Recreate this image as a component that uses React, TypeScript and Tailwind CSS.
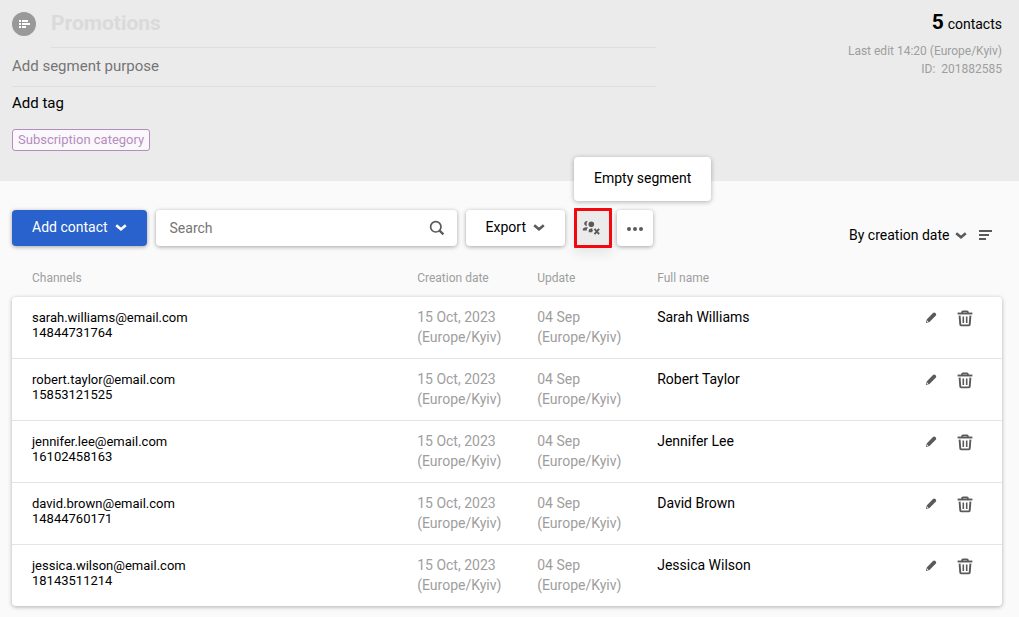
import React from "react";

type Contact = { email: string; phone: string; name: string };

const contacts: Contact[] = [
  { email: "sarah.williams@email.com", phone: "14844731764", name: "Sarah Williams" },
  { email: "robert.taylor@email.com", phone: "15853121525", name: "Robert Taylor" },
  { email: "jennifer.lee@email.com", phone: "16102458163", name: "Jennifer Lee" },
  { email: "david.brown@email.com", phone: "14844760171", name: "David Brown" },
  { email: "jessica.wilson@email.com", phone: "18143511214", name: "Jessica Wilson" },
];

const rowGrid =
  "grid grid-cols-[minmax(0,3fr)_120px_120px_minmax(0,2fr)_68px] px-5";
const raised = "rounded bg-white shadow-[0_1px_4px_rgba(0,0,0,0.35)]";

function Chevron({ className }: { className?: string }) {
  return (
    <svg className={className} width="12" height="8" viewBox="0 0 12 8" fill="none" stroke="currentColor" strokeWidth="2.6" aria-hidden="true">
      <path d="M1.2 2.200 6 6.200l4.800-4" />
    </svg>
  );
}

function SegmentIcon() {
  return (
    <svg width="24" height="24" viewBox="0 0 24 24" aria-hidden="true">
      <circle cx="12" cy="12" r="12" fill="#999" />
      <path fill="#fff" d="M7 8h2v2H7zM10 8h6v2h-6zM7 11h2v2H7zM10 11h8v2h-8zM7 14h2v2H7zM10 14h4v2h-4z" />
    </svg>
  );
}

function SearchIcon() {
  return (
    <svg width="16" height="16" viewBox="0 0 16 16" fill="none" stroke="#5a5a5a" aria-hidden="true">
      <circle cx="6.8" cy="6.8" r="5.200" strokeWidth="1.7" />
      <path d="m10.6 10.6 3.800 3.800" strokeWidth="2.2" />
    </svg>
  );
}

function EmptySegmentIcon() {
  return (
    <svg width="18" height="16" viewBox="0 0 18 16" fill="#5a5a5a" aria-hidden="true">
      <path d="M5.600 1.100C4 .7 2.200 1.900 2.200 3.600c0 1.500 1.200 2.500 2.800 2.500-.7-1.700-.5-3.600.6-5z" />
      <circle cx="9.300" cy="4.300" r="2.800" />
      <path d="M.8 10.500V9.300C.8 7.800 2.600 7.200 6 7.200c-.8.8-1.200 1.800-1.200 3.300z" />
      <path d="M6.700 12.200v-1.400c0-1.500 1.300-2.500 3.800-2.500-.4.900-.2 1.500.6 2.200-.7.500-1 1-.9 1.700z" />
      <path d="m12.500 8.900 4.600 5.200m0-5.200-4.600 5.200" fill="none" stroke="#5a5a5a" strokeWidth="1.900" />
    </svg>
  );
}

function MoreIcon() {
  return (
    <svg className="mt-0.5" width="16" height="4" viewBox="0 0 16 4" fill="#5a5a5a" aria-hidden="true">
      <circle cx="2" cy="2" r="2" />
      <circle cx="8" cy="2" r="2" />
      <circle cx="14" cy="2" r="2" />
    </svg>
  );
}

function SortIcon() {
  return (
    <svg width="13" height="10" viewBox="0 0 13 10" fill="#5a5a5a" aria-hidden="true">
      <path d="M0 0h13v2H0zM0 4h10v2H0zM0 8h7v2H0z" />
    </svg>
  );
}

function PencilIcon() {
  return (
    <svg width="12" height="12" viewBox="0 0 12 12" aria-hidden="true">
      <path fill="#5a5a5a" d="M8 1.100c.7-.7 1.700-.7 2.400 0l.3.3c.7.700.7 1.700 0 2.400L4.500 10 .8 11.100l1.100-3.900z" />
      <path fill="#fff" d="m2.300 8.500 1.100 1.100-1.300.5-.3-.3z" />
    </svg>
  );
}

function TrashIcon() {
  return (
    <svg width="16" height="18" viewBox="0 0 16 18" fill="none" stroke="#5a5a5a" strokeWidth="1.900" aria-hidden="true">
      <path d="M.6 4.500h14.800" />
      <path d="M5.200 4.500V3.200c0-.5.300-.8.800-.8h4c.5 0 .8.300.8.800v1.300" />
      <path d="M2.600 6.600 3.300 15.600c0 .5.300.8.800.8h7.800c.5 0 .8-.3.800-.8l.7-9" />
      <path d="M6.300 7.500v6.400M9.700 7.500v6.400" strokeWidth="1.600" />
    </svg>
  );
}

export default function App() {
  return (
    <div className="min-h-screen bg-[#fafafa] font-[Roboto,sans-serif] text-[15px] text-black">
      <header className="flex justify-between bg-[#ebebeb] pt-2.5 pr-[17px] pb-[30px] pl-3">
        <div className="w-[65%] pt-0.5">
          <div className="flex gap-[15px]">
            <SegmentIcon />
            <input
              aria-label="Segment name"
              defaultValue="Promotions"
              className="h-9 min-w-0 flex-1 border-b border-[#dedede] pb-[13px] text-[21px]/6 font-bold text-[#dadada] outline-none"
            />
          </div>
          <input
            aria-label="Segment purpose"
            placeholder="Add segment purpose"
            className="block h-[39px] w-full border-b border-[#dedede] pb-0.5 placeholder:text-[#757575] outline-none"
          />
          <button type="button" className="mt-1.5 block leading-5">Add tag</button>
          <a href="#category" className="mt-4 inline-flex h-[22px] items-center rounded-[3px] border border-[#b48dc0] bg-[#fbf8fc] px-[5px] text-[13px] text-[#b48dc0]">
            Subscription category
          </a>
        </div>
        <div className="text-right">
          <p className="leading-6"><strong className="text-[21px]/6">5</strong> <span className="text-sm">contacts</span></p>
          <div className="mt-1.5 text-xs leading-[18px] text-[#9e9e9e]">
            <p>Last edit 14:20 (Europe/Kyiv)</p>
            <p>ID:&nbsp; 201882585</p>
          </div>
        </div>
      </header>

      <main className="pt-[27px] pr-[17px] pb-[11px] pl-3">
        <div className="flex items-center justify-between">
          <div className="flex items-center gap-[9px]">
            <button type="button" className="flex h-9 items-center gap-[7px] rounded bg-[#2962cc] px-5 pb-0.5 text-sm text-white shadow-[0_1px_4px_rgba(0,0,0,0.35)]">
              Add contact <Chevron />
            </button>
            <form role="search" className={`${raised} flex h-9 w-[301px] items-center pr-3 pl-3.5`}>
              <input type="search" aria-label="Search" placeholder="Search" className="min-w-0 flex-1 text-sm placeholder:text-[#757575] outline-none" />
              <button type="submit" aria-label="Search"><SearchIcon /></button>
            </form>
            <button type="button" className={`${raised} flex h-9 items-center gap-[7px] px-5 pb-0.5 text-sm`}>
              Export <Chevron className="text-[#5a5a5a]" />
            </button>
            <div className="flex items-center gap-[5px]">
              <div className="relative">
                <button type="button" aria-label="Empty segment" aria-describedby="empty-tip" className="flex h-10 w-[38px] items-center justify-center rounded-[1px] border-3 border-[#f2080d] bg-[#ebebeb] pr-1 shadow-[0_6px_12px_rgba(0,0,0,0.08)]">
                  <EmptySegmentIcon />
                </button>
                <div id="empty-tip" role="tooltip" className="absolute bottom-full left-0 mb-[7px] flex h-11 items-center rounded bg-white px-5 pb-0.5 text-sm whitespace-nowrap shadow-[0_1px_5px_rgba(0,0,0,0.3)]">
                  Empty segment
                </div>
              </div>
              <button type="button" aria-label="More actions" className={`${raised} flex h-9 w-9 items-center justify-center`}>
                <MoreIcon />
              </button>
            </div>
          </div>
          <div className="flex items-center gap-3 pt-3.5 pr-2.5">
            <div className="flex items-center">
              <select aria-label="Sort order" className="-mr-3 appearance-none bg-transparent pr-[17px] text-sm outline-none">
                <option>By creation date</option>
              </select>
              <Chevron className="pointer-events-none text-[#5a5a5a]" />
            </div>
            <button type="button" aria-label="Sort direction"><SortIcon /></button>
          </div>
        </div>

        <table className="mt-5 block">
          <thead className="block">
            <tr className={`${rowGrid} text-left text-xs/5 text-[#9e9e9e]`}>
              <th className="font-normal">Channels</th>
              <th className="font-normal">Creation date</th>
              <th className="font-normal">Update</th>
              <th className="font-normal">Full name</th>
              <td />
            </tr>
          </thead>
          <tbody className="mt-[9px] block rounded bg-white shadow-[0_1px_4px_rgba(0,0,0,0.3)]">
            {contacts.map((c) => (
              <tr key={c.email} className={`${rowGrid} h-[62px] border-b border-[#e4e4e4] pt-2.5 text-sm/5 last:h-[61px] last:border-b-0`}>
                <td className="pt-[3px] text-[13px]/[15px]">
                  <div>{c.email}</div>
                  <div>{c.phone}</div>
                </td>
                <td className="text-[#9e9e9e]">15 Oct, 2023 (Europe/Kyiv)</td>
                <td className="text-[#9e9e9e]">04 Sep<br />(Europe/Kyiv)</td>
                <td>{c.name}</td>
                <td className="grid h-[22px] grid-cols-2">
                  <button type="button" aria-label={`Edit ${c.name}`} className="flex items-center justify-center"><PencilIcon /></button>
                  <button type="button" aria-label={`Delete ${c.name}`} className="flex items-center justify-center"><TrashIcon /></button>
                </td>
              </tr>
            ))}
          </tbody>
        </table>
      </main>
    </div>
  );
}
